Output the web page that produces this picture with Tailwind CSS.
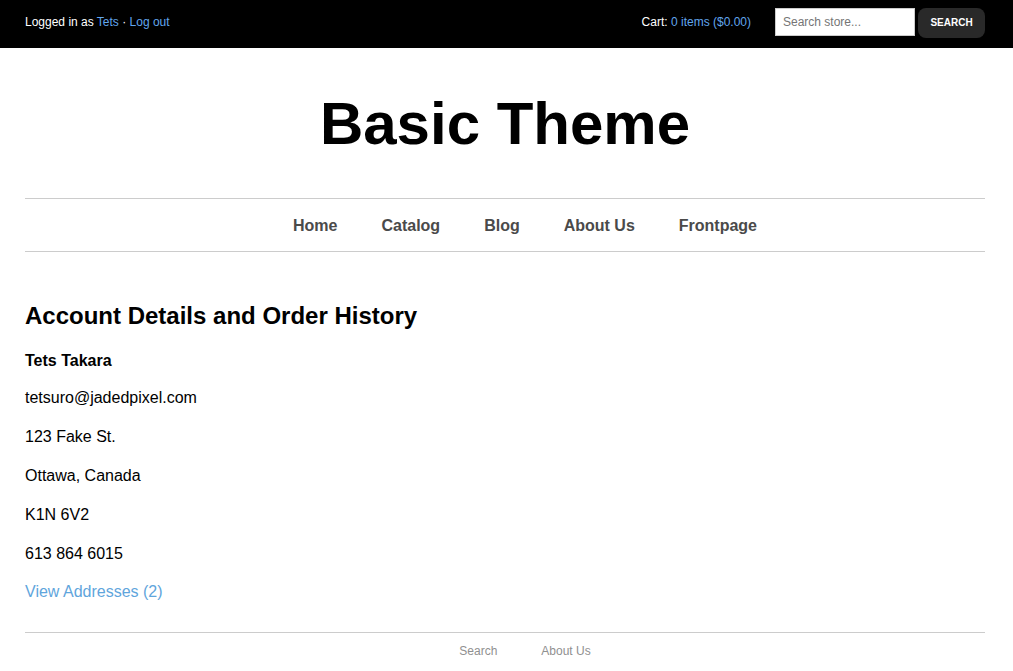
<!DOCTYPE html>
<html lang="en">
<head>
<meta charset="utf-8">
<meta name="viewport" content="width=device-width, initial-scale=1">
<title>Basic Theme</title>
<script src="https://cdn.jsdelivr.net/npm/@tailwindcss/browser@4"></script>
</head>
<body class="bg-white font-['Liberation_Sans',Arial,sans-serif] text-base text-black">
<div class="bg-black text-xs text-white">
  <div class="mx-auto flex h-12 max-w-[1013px] items-start justify-between pt-2 pr-7 pl-[25px]">
    <p class="leading-7">Logged in as <a href="#" class="text-[#61a6ee]">Tets</a> · <a href="#" class="text-[#61a6ee]">Log out</a></p>
    <div class="flex items-start">
      <p class="mr-6 leading-7">Cart: <a href="#" class="text-[#61a6ee]">0 items ($0.00)</a></p>
      <form class="flex items-start gap-[3px]">
        <input type="text" aria-label="Search store" placeholder="Search store..." class="h-7 w-[140px] border border-[#ccc] bg-white px-[7px] text-xs text-black placeholder:text-[#757575]">
        <button type="button" class="h-[30px] w-[67px] rounded-lg bg-[#292929] text-center text-[10px] font-bold">SEARCH</button>
      </form>
    </div>
  </div>
</div>
<div class="mx-auto max-w-[1013px] pr-7 pl-[25px]">
  <header>
    <h1 class="pt-[41px] pb-[39px] text-center text-[60px] leading-[70px] font-bold">Basic Theme</h1>
    <nav class="flex items-center justify-center gap-11 border-y border-[#ccc] pt-[15px] pb-[13px] pl-10 leading-6 font-bold text-[#4a4a4a]">
      <a href="#">Home</a><a href="#">Catalog</a><a href="#">Blog</a><a href="#">About Us</a><a href="#">Frontpage</a>
    </nav>
  </header>
  <main class="pt-[49px] pb-7">
    <h2 class="text-2xl leading-[30px] font-bold">Account Details and Order History</h2>
    <h3 class="mt-[18px] mb-[5px] leading-6 font-bold">Tets Takara</h3>
    <div class="mb-[7px] leading-[39px]">
      <p>tetsuro@jadedpixel.com</p>
      <p>123 Fake St.</p>
      <p>Ottawa, Canada</p>
      <p>K1N 6V2</p>
      <p>613 864 6015</p>
    </div>
    <a href="#" class="text-[#5fa5dc]">View Addresses (2)</a>
  </main>
  <footer class="flex justify-center gap-11 border-t border-[#ccc] py-[10px] pl-10 text-xs text-[#909090]">
    <a href="#">Search</a><a href="#">About Us</a>
  </footer>
</div>
</body>
</html>
